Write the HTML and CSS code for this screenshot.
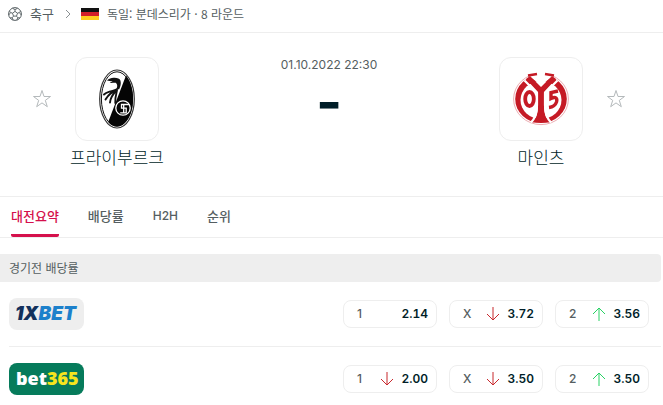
FILE: index.html
```html
<!DOCTYPE html>
<html lang="ko">
<head>
  <meta charset="UTF-8">
  <meta name="viewport" content="width=device-width, initial-scale=1.0">
  <title>프라이부르크 - 마인츠</title>
  <link rel="stylesheet" href="styles.css">
</head>
<body>

  <!-- Breadcrumb -->
  <nav class="breadcrumb">
    <svg class="ball" viewBox="0 0 14 14" width="14" height="14" fill="none" stroke="#555e61">
      <circle cx="7" cy="7" r="6.4"/>
      <path d="M7 4.4l2.5 1.8-1 2.9h-3l-1-2.9zM7 4.4V2.6M9.5 6.2l1.8-.6M8.5 9.1l1.2 1.6M5.5 9.1l-1.2 1.6M4.5 6.2l-1.8-.6M4.4 1.3L7 2.6l2.6-1.3M12.6 4l-1.3 1.6 2 2.4M12 11l-2.3-.3-.8 2.4M2 11l2.3-.3.8 2.4M1.4 4l1.3 1.6-2 2.4" stroke-width=".9"/>
    </svg>
    <a href="#">축구</a>
    <svg class="chevron" viewBox="0 0 6 10" width="6" height="10" fill="none" stroke="#8a9092">
      <path d="M1 1l4 4-4 4"/>
    </svg>
    <svg class="flag" viewBox="0 0 18 12" width="18" height="12">
      <rect width="18" height="4" fill="#111"/>
      <rect y="4" width="18" height="4" fill="#d3202a"/>
      <rect y="8" width="18" height="4" fill="#ffce1f"/>
    </svg>
    <a class="league" href="#">독일: 분데스리가 · 8 라운드</a>
  </nav>

  <!-- Teams -->
  <main>
    <section class="match">
      <button class="favorite" type="button" aria-label="프라이부르크">
        <svg viewBox="0 0 20 20" width="20" height="20" fill="none" stroke="#b4b9bb">
          <path d="M10 1.5l2 6h6.500l-5.200 3.900 2 6.300L10 13.900l-5.300 3.800 2-6.300L1.500 7.500H8z"/>
        </svg>
      </button>
      <div class="team">
        <a class="crest" href="#" aria-label="프라이부르크">
          <svg viewBox="0 0 36 60" width="36" height="60">
            <ellipse cx="18" cy="30" rx="17.300" ry="29" fill="#fff" stroke="#333" stroke-width="1.200"/>
            <ellipse cx="18" cy="30" rx="15.600" ry="27.200" fill="#fff" stroke="#111" stroke-width="1"/>
            <path d="M27 6.500C31 11 34 20 34 30c0 15.500-7.500 27.500-16 27.500-3.500 0-6.300-1.700-8.800-4.500z" fill="#050505"/>
            <path d="M8 11.500c2-2 5-3 7.500-2.700 3 .1 5.300.8 6 3 .8 3-.2 6-1.300 8.500l-2.500-1c1-2.500.5-4.500-1-5.500-2.500-.2-4 .5-6 0l3-1.300c-2-.6-4-.6-5.700-1z" fill="#111"/>
            <path d="M19 19.500c-3 2.500-6 2-8.500 3.200C8 23.500 6.500 24 5 25.500M17.500 21.500c-4 1-8 4-11 9M17.500 21.500c-3 3-6 6-6.500 12M18 21.500c-1 4-2 7-1.700 12.500" fill="none" stroke="#111" stroke-width="1.900" stroke-linecap="round"/>
            <circle cx="24" cy="39" r="7.200" fill="none" stroke="#fff" stroke-width="1.300"/>
            <path d="M30 35.500h-7.500v3.700h4.700v4.600h-6M24.700 35.500v8.300" fill="none" stroke="#fff" stroke-width="1.300"/>
          </svg>
        </a>
        <a class="team-name" href="#">프라이부르크</a>
      </div>
      <div class="result">
        <time class="kickoff" datetime="2022-10-01T22:30">01.10.2022 22:30</time>
        <div class="score">-</div>
      </div>
      <div class="team">
        <a class="crest" href="#" aria-label="마인츠">
          <svg viewBox="0 0 56 56" width="56" height="56">
            <ellipse cx="28" cy="28" rx="27.400" ry="25.600" fill="#fff" stroke="#e28a90" stroke-width=".7"/>
            <ellipse cx="28" cy="28" rx="25.800" ry="24" fill="#c51a25"/>
            <ellipse cx="28" cy="29" rx="20.500" ry="19" fill="#fff"/>
            <path d="M21 0h14l4 6-11 8-11-8z" fill="#fff"/>
            <path d="M13 8l4-3 11 11 11-11 4 3-12 13v13c0 9 2 14 6 17.500H19c4-3.500 6-8.500 6-17.500V21z" fill="#c51a25"/>
            <path d="M11.500 9.500L24 22v12c0 7-1.500 13-6 17.500M44.500 9.500L32 22v12c0 7 1.500 13 6 17.500" fill="none" stroke="#fff" stroke-width="2.200"/>
            <path d="M15 4.500l9-1.500M41 4.500L32 3" fill="none" stroke="#c51a25" stroke-width="2.600"/>
            <ellipse cx="16.500" cy="28" rx="4.300" ry="7" fill="none" stroke="#c51a25" stroke-width="3.800"/>
            <path d="M45 20l-7 1.500v6c5-2.500 6.500 0 5.500 3.500-1 3-3.500 5-7.500 5.500" fill="none" stroke="#c51a25" stroke-width="3.400"/>
          </svg>
        </a>
        <a class="team-name" href="#">마인츠</a>
      </div>
      <button class="favorite" type="button" aria-label="마인츠">
        <svg viewBox="0 0 20 20" width="20" height="20" fill="none" stroke="#b4b9bb">
          <path d="M10 1.500l2 6h6.500l-5.200 3.900 2 6.300L10 13.900l-5.300 3.800 2-6.300L1.500 7.500H8z"/>
        </svg>
      </button>
    </section>

    <!-- Tabs -->
    <nav class="tabs">
      <a class="tab active" href="#">대전요약</a>
      <a class="tab" href="#">배당률</a>
      <a class="tab latin" href="#">H2H</a>
      <a class="tab" href="#">순위</a>
    </nav>

    <!-- Pre-match odds -->
    <section class="odds">
      <h2 class="odds-title">경기전 배당률</h2>

      <div class="odds-row">
        <a class="bookmaker xbet" href="#">
          <svg viewBox="0 0 75 32" width="75" height="32">
            <text class="xbet-text" x="6" y="22"><tspan fill="#12305c">1X</tspan><tspan fill="#1c80cb">BET</tspan></text>
          </svg>
        </a>
        <button class="odd" type="button"><span class="outcome">1</span><span class="value">2.14</span></button>
        <button class="odd" type="button">
          <span class="outcome">X</span>
          <svg class="arrow down" viewBox="0 0 14 16" width="14" height="16"><path d="M7 1v13M1 8l6 6 6-6"/></svg>
          <span class="value">3.72</span>
        </button>
        <button class="odd" type="button">
          <span class="outcome">2</span>
          <svg class="arrow up" viewBox="0 0 14 16" width="14" height="16"><path d="M7 15V2M1 8l6-6 6 6"/></svg>
          <span class="value">3.56</span>
        </button>
      </div>

      <div class="odds-row">
        <a class="bookmaker bet365" href="#">
          <svg viewBox="0 0 75 32" width="75" height="32">
            <text class="bet365-text" x="7" y="22"><tspan fill="#fff">bet</tspan><tspan fill="#f7e51d">365</tspan></text>
          </svg>
        </a>
        <button class="odd" type="button">
          <span class="outcome">1</span>
          <svg class="arrow down" viewBox="0 0 14 16" width="14" height="16"><path d="M7 1v13M1 8l6 6 6-6"/></svg>
          <span class="value">2.00</span>
        </button>
        <button class="odd" type="button">
          <span class="outcome">X</span>
          <svg class="arrow down" viewBox="0 0 14 16" width="14" height="16"><path d="M7 1v13M1 8l6 6 6-6"/></svg>
          <span class="value">3.50</span>
        </button>
        <button class="odd" type="button">
          <span class="outcome">2</span>
          <svg class="arrow up" viewBox="0 0 14 16" width="14" height="16"><path d="M7 15V2M1 8l6-6 6 6"/></svg>
          <span class="value">3.50</span>
        </button>
      </div>
    </section>
  </main>

</body>
</html>
```

FILE: styles.css
```css
* {
  box-sizing: border-box;
}

body {
  margin: 0;
  background-color: #fff;
  color: #001e28;
  font-family: Inter, "Noto Sans CJK KR", sans-serif;
  font-size: 12px;
  line-height: 16px;
}

a {
  color: inherit;
  text-decoration: none;
}

button {
  font: inherit;
  color: inherit;
  background: none;
  border: none;
  padding: 0;
  cursor: pointer;
}

svg {
  display: block;
}

/* Breadcrumb */
.breadcrumb {
  display: flex;
  align-items: center;
  height: 33px;
  padding: 0 8px 4px;
  border-bottom: 1px solid #eee;
  color: #555e61;
  font-family: "Noto Sans CJK KR", sans-serif;
  font-size: 13px;
}

.ball {
  margin-right: 8px;
}

.chevron {
  margin: 0 10px 0 11px;
}

.flag {
  margin-right: 8px;
}

.league {
  font-size: 12px;
}

/* Match header */
.match {
  display: flex;
  align-items: flex-start;
  padding: 24px 37px 27px 32px;
  border-bottom: 1px solid #eee;
}

.favorite {
  margin-top: 32px;
}

.team {
  display: flex;
  flex-direction: column;
  align-items: center;
  width: 130px;
}

.crest {
  display: flex;
  align-items: center;
  justify-content: center;
  width: 84px;
  height: 84px;
  border: 1px solid #eee;
  border-radius: 12px;
}

.team-name {
  margin-top: 4px;
  font-family: "Noto Sans CJK KR", sans-serif;
  font-size: 17px;
  font-weight: 300;
  line-height: 24px;
}

.result {
  flex: 1;
  text-align: center;
}

.kickoff {
  display: block;
  color: #555e61;
}

.score {
  margin-top: 5px;
  font-size: 56px;
  font-weight: 700;
  line-height: 48px;
}

/* Tabs */
.tabs {
  display: flex;
  gap: 29px;
  height: 41px;
  padding: 0 11px;
  border-bottom: 1px solid #eee;
}

.tab {
  border-bottom: 3px solid transparent;
  color: #555e61;
  font-family: "Noto Sans CJK KR", sans-serif;
  font-size: 13px;
  font-weight: 500;
  line-height: 38px;
}

.tab.latin {
  font-family: Inter, sans-serif;
  font-size: 12px;
}

.tab.active {
  border-color: #d5104c;
  border-radius: 2px;
  color: #d5104c;
}

/* Odds */
.odds {
  margin: 16px 2px 0 0;
}

.odds-title {
  margin: 0;
  padding: 0 9px;
  border-radius: 0 4px 4px 0;
  background-color: #eee;
  color: #555e61;
  font-family: "Noto Sans CJK KR", sans-serif;
  font-size: 12px;
  font-weight: 400;
  line-height: 28px;
}

.odds-row {
  display: flex;
  align-items: center;
  gap: 12px;
  height: 65px;
  margin-left: 9px;
  padding-right: 12px;
  border-bottom: 1px solid #eee;
}

.odds-row:last-child {
  border-bottom-color: transparent;
}

.bookmaker {
  margin-right: auto;
  border-radius: 8px;
}

.xbet {
  background-color: #eee;
}

.xbet-text {
  font-family: Inter, sans-serif;
  font-size: 19px;
  font-style: italic;
  font-weight: 900;
}

.bet365 {
  background-color: #067b5b;
}

.bet365-text {
  font-family: "Open Sans", sans-serif;
  font-size: 18px;
  font-weight: 800;
}

.odd {
  display: flex;
  align-items: center;
  width: 94px;
  height: 28px;
  padding: 0 8px 0 13px;
  border: 1px solid #eee;
  border-radius: 8px;
}

.outcome {
  margin-right: auto;
  color: #555e61;
  font-weight: 500;
}

.value {
  font-weight: 600;
  font-variant-numeric: tabular-nums;
}

.arrow {
  margin-right: 7px;
  fill: none;
}

.down {
  stroke: #c8282d;
}

.up {
  stroke: #28d264;
}
```
